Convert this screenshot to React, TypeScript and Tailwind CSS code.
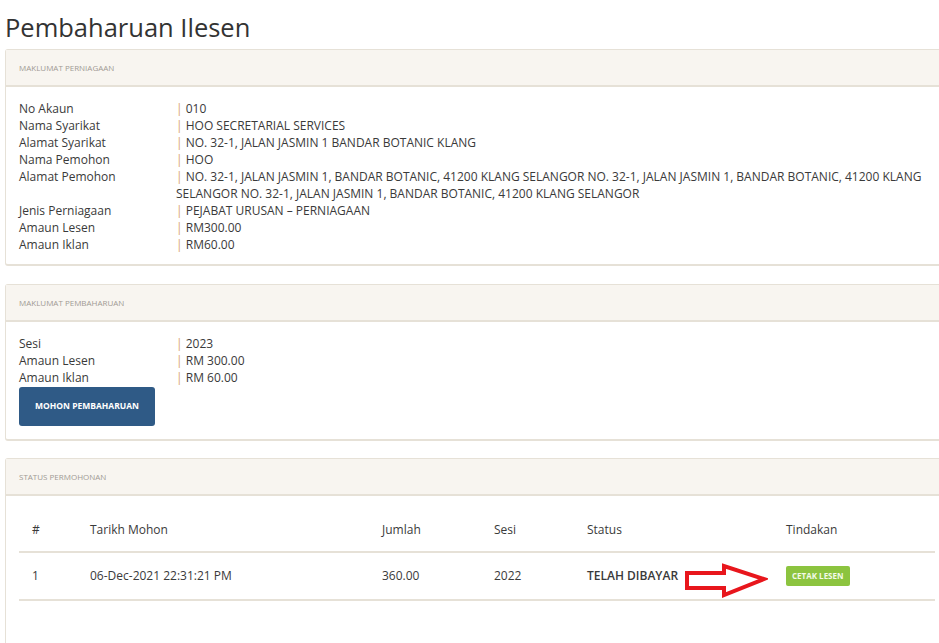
const perniagaan = [
  ["No Akaun", "010"],
  ["Nama Syarikat", "HOO SECRETARIAL SERVICES"],
  ["Alamat Syarikat", "NO. 32-1, JALAN JASMIN 1 BANDAR BOTANIC KLANG"],
  ["Nama Pemohon", "HOO"],
  [
    "Alamat Pemohon",
    "NO. 32-1, JALAN JASMIN 1, BANDAR BOTANIC, 41200 KLANG SELANGOR NO. 32-1, JALAN JASMIN 1, BANDAR BOTANIC, 41200 KLANG SELANGOR NO. 32-1, JALAN JASMIN 1, BANDAR BOTANIC, 41200 KLANG SELANGOR",
  ],
  ["Jenis Perniagaan", "PEJABAT URUSAN \u2013 PERNIAGAAN"],
  ["Amaun Lesen", "RM300.00"],
  ["Amaun Iklan", "RM60.00"],
];

const pembaharuan = [
  ["Sesi", "2023"],
  ["Amaun Lesen", "RM 300.00"],
  ["Amaun Iklan", "RM 60.00"],
];

function Panel({ title, children }: { title: string; children: React.ReactNode }) {
  return (
    <div className="w-[960px] rounded-[3px] border border-[#e6e1d7] border-b-2 bg-white">
      <div className="flex h-[37px] items-center border-b-2 border-[#e6e1d7] bg-[#f8f5f0] px-[13px] text-[8px] uppercase text-[#a09a94]">
        {title}
      </div>
      {children}
    </div>
  );
}

function InfoRows({ rows }: { rows: string[][] }) {
  return (
    <div className="text-[12px] leading-[17px] text-[#3a3a3a]">
      {rows.map(([label, value]) => (
        <div key={label} className="flex">
          <div className="w-[157px] shrink-0">{label}</div>
          <div className="w-[760px]">
            <span className="text-[#d8a56e]">|</span> {value}
          </div>
        </div>
      ))}
    </div>
  );
}

function RedArrow() {
  return (
    <svg width="84" height="36" viewBox="0 0 84 36" className="absolute left-[-102px] top-[-3px]">
      <polygon
        points="3,10 40,10 40,3 80,16 40,32 40,25 3,25"
        fill="white"
        stroke="#e8161c"
        strokeWidth="4"
        strokeLinejoin="miter"
      />
    </svg>
  );
}

export default function App() {
  return (
    <div
      className="min-h-[643px] w-[939px] overflow-hidden bg-white pl-[5px]"
      style={{ fontFamily: '"Open Sans", "Liberation Sans", sans-serif' }}
    >
      <h1 className="h-[49px] pt-[9px] text-[25.5px] leading-[36px] text-[#333]">Pembaharuan Ilesen</h1>

      <Panel title="Maklumat Perniagaan">
        <div className="px-[13px] pb-[11px] pt-[13px]">
          <InfoRows rows={perniagaan} />
        </div>
      </Panel>

      <div className="h-[18px]" />

      <Panel title="Maklumat Pembaharuan">
        <div className="px-[13px] pb-[13px] pt-[13px]">
          <InfoRows rows={pembaharuan} />
          <button className="mt-px h-[39px] w-[136px] rounded-[3px] bg-[#2f5a86] text-[8.5px] font-bold uppercase text-white">
            Mohon Pembaharuan
          </button>
        </div>
      </Panel>

      <div className="h-[17px]" />

      <Panel title="Status Permohonan">
        <div className="px-[13px] pb-[60px] pt-[13px]">
          <table className="w-[916px] table-fixed border-collapse text-left text-[12px] text-[#3a3a3a]">
            <colgroup>
              <col className="w-[58px]" />
              <col className="w-[292px]" />
              <col className="w-[112px]" />
              <col className="w-[93px]" />
              <col className="w-[199px]" />
              <col />
            </colgroup>
            <thead>
              <tr className="h-[43px] border-b-2 border-[#e6e1d7]">
                <th className="px-[13px] font-normal">#</th>
                <th className="px-[13px] font-normal">Tarikh Mohon</th>
                <th className="px-[13px] font-normal">Jumlah</th>
                <th className="px-[13px] font-normal">Sesi</th>
                <th className="px-[13px] font-normal">Status</th>
                <th className="px-[13px] font-normal">Tindakan</th>
              </tr>
            </thead>
            <tbody>
              <tr className="h-[48px] border-b-2 border-[#e6e1d7]">
                <td className="px-[13px]">1</td>
                <td className="px-[13px]">06-Dec-2021 22:31:21 PM</td>
                <td className="px-[13px]">360.00</td>
                <td className="px-[13px]">2022</td>
                <td className="px-[13px] font-semibold">TELAH DIBAYAR</td>
                <td className="px-[13px]">
                  <div className="relative inline-block">
                    <RedArrow />
                    <button className="h-[20px] rounded-[2px] bg-[#8cc43f] px-[6px] text-[8px] font-bold uppercase text-[#f3fae8]">
                      Cetak Lesen
                    </button>
                  </div>
                </td>
              </tr>
            </tbody>
          </table>
        </div>
      </Panel>
    </div>
  );
}
